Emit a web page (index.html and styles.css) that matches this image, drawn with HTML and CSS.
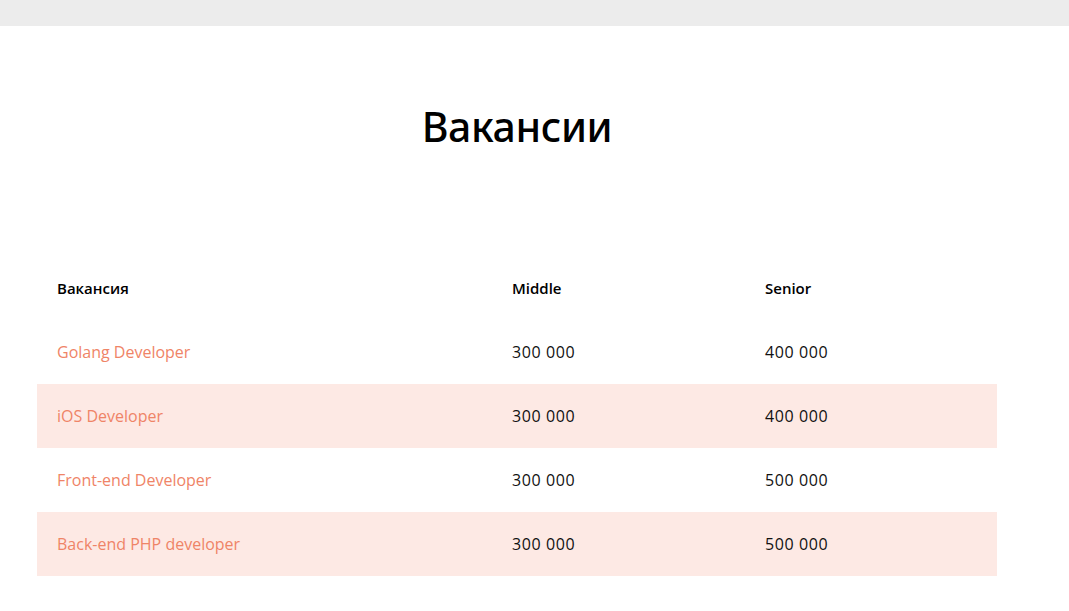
FILE: index.html
```html
<!DOCTYPE html>
<html lang="ru">
<head>
<meta charset="utf-8">
<link rel="stylesheet" href="styles.css">
</head>
<body>
<div class="topbar"></div>
<main class="container">
  <h1 class="title">Вакансии</h1>
  <table class="jobs">
    <thead>
      <tr><th class="c1">Вакансия</th><th class="c2">Middle</th><th class="c3">Senior</th></tr>
    </thead>
    <tbody>
      <tr><td class="name">Golang Developer</td><td>300 000</td><td>400 000</td></tr>
      <tr class="alt"><td class="name">iOS Developer</td><td>300 000</td><td>400 000</td></tr>
      <tr><td class="name">Front-end Developer</td><td>300 000</td><td>500 000</td></tr>
      <tr class="alt"><td class="name">Back-end PHP developer</td><td>300 000</td><td>500 000</td></tr>
    </tbody>
  </table>
</main>
</body>
</html>
```
FILE: styles.css
```css
html, body { margin: 0; padding: 0; background: #fff; }
body { font-family: "Open Sans", "Noto Sans", sans-serif; color: #111; }
.topbar { height: 26px; background: #ececec; }
.container { width: 960px; margin-left: 37px; }
.title {
  margin: 0 0 74px;
  padding-top: 73px;
  height: 156px;
  box-sizing: border-box;
  text-align: center;
  font-family: "Noto Sans", sans-serif;
  font-weight: 500;
  font-size: 41px;
  line-height: 54px;
  color: #000;
  letter-spacing: -0.4px;
}
.jobs { width: 960px; border-collapse: collapse; table-layout: fixed; }
.jobs th, .jobs td { height: 64px; padding: 0 20px; text-align: left; font-size: 16px; box-sizing: border-box; }
.jobs th { font-weight: 600; color: #000; font-size: 15px; }
.jobs td { color: #111; letter-spacing: 0.6px; }
.c1 { width: 455px; }
.c2 { width: 253px; }
.c3 { width: 252px; }
.jobs td.name { color: #ef8467; font-size: 16px; letter-spacing: 0; }
.jobs tr.alt td { background: #fde9e4; }
```
